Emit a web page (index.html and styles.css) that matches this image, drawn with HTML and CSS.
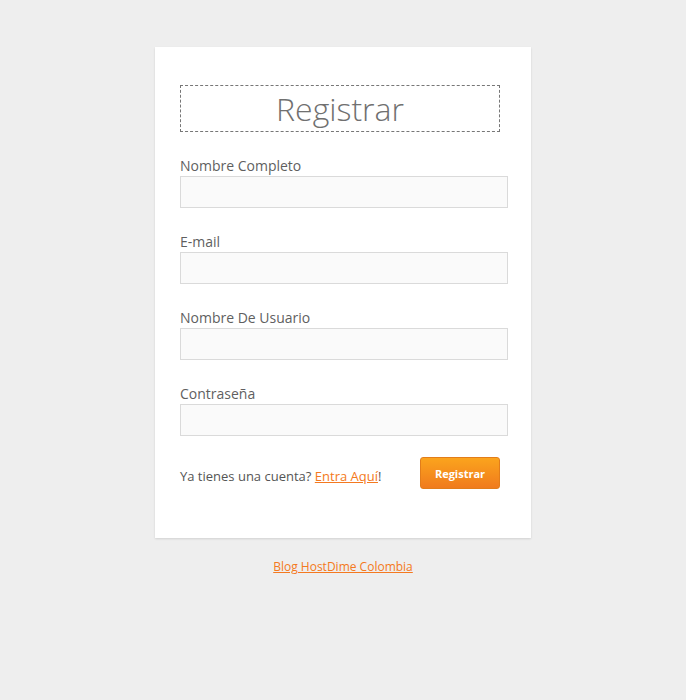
FILE: index.html
```html
<!DOCTYPE html>
<html lang="es">
<head>
<meta charset="utf-8">
<title>Registrar</title>
<link rel="stylesheet" href="styles.css">
</head>
<body>
<main class="page">
  <form class="card">
    <h1 class="title">Registrar</h1>
    <div class="field">
      <label class="label">Nombre Completo</label>
      <input class="input" type="text">
    </div>
    <div class="field">
      <label class="label">E-mail</label>
      <input class="input" type="text">
    </div>
    <div class="field">
      <label class="label">Nombre De Usuario</label>
      <input class="input" type="text">
    </div>
    <div class="field field-last">
      <label class="label">Contraseña</label>
      <input class="input" type="password">
    </div>
    <div class="actions">
      <p class="signin">Ya tienes una cuenta? <a href="#" class="link">Entra Aquí</a>!</p>
      <button type="button" class="btn">Registrar</button>
    </div>
  </form>
  <a href="#" class="link blog">Blog HostDime Colombia</a>
</main>
</body>
</html>
```

FILE: styles.css
```css
html, body {
  margin: 0;
  padding: 0;
  background: #eeeeee;
  font-family: "Open Sans", "Liberation Sans", sans-serif;
}
.page {
  display: flex;
  flex-direction: column;
  align-items: center;
  padding-top: 47px;
}
.card {
  box-sizing: border-box;
  width: 376px;
  background: #fff;
  padding: 38px 31px 49px 25px;
  box-shadow: 0 1px 2px rgba(0,0,0,0.12);
  display: flex;
  flex-direction: column;
}
.title {
  margin: 0 0 25px 0;
  height: 45px;
  border: 1px dashed #777;
  font-weight: 300;
  font-size: 32px;
  line-height: 45px;
  text-align: center;
  color: #707070;
}
.field {
  display: flex;
  flex-direction: column;
  margin-bottom: 25px;
}
.field-last {
  margin-bottom: 21px;
}
.label {
  font-size: 14px;
  line-height: 18px;
  color: #5f5f5f;
  margin-bottom: 1px;
}
.input {
  box-sizing: border-box;
  width: 328px;
  height: 32px;
  margin: 0;
  background: #fafafa;
  border: 1px solid #dadada;
  outline: none;
}
.actions {
  display: flex;
  justify-content: space-between;
  align-items: center;
}
.signin {
  margin: 6px 0 0 0;
  font-size: 13px;
  color: #555;
}
.link {
  color: #f47920;
  text-decoration: underline;
}
.btn {
  width: 80px;
  height: 32px;
  border: 1px solid #e27d1a;
  border-radius: 3px;
  background: linear-gradient(#fba41d, #f07b1d);
  color: #fff;
  font-family: "Open Sans", "Liberation Sans", sans-serif;
  font-weight: 700;
  font-size: 11px;
  padding: 0;
}
.blog {
  margin-top: 20px;
  font-size: 12px;
}
```
